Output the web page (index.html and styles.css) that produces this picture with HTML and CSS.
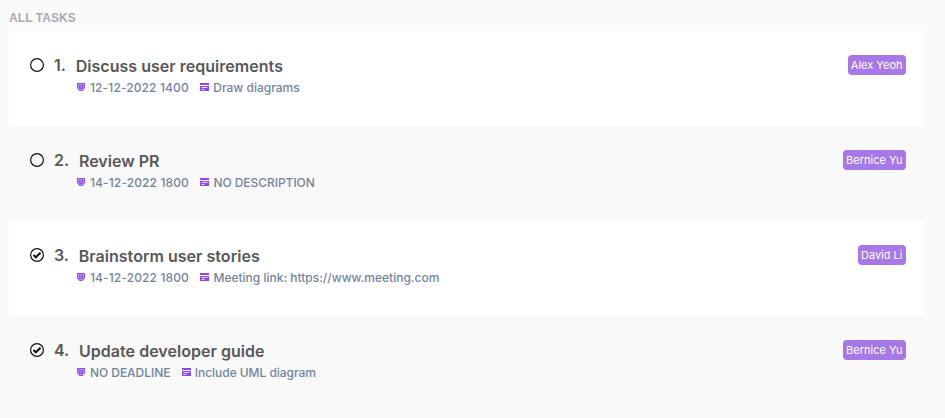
FILE: index.html
```html
<!DOCTYPE html>
<html lang="en"><head><meta charset="utf-8"><title>All tasks</title><link rel="stylesheet" href="styles.css"></head>
<body>
<svg class="defs" aria-hidden="true">
<symbol id="open" viewBox="0 0 16 16"><circle cx="8" cy="8" r="6.4" fill="none" stroke="#111" stroke-width="1.2"/></symbol>
<symbol id="done" viewBox="0 0 16 16"><circle cx="8" cy="8" r="6.4" fill="none" stroke="#111" stroke-width="1.2"/><path d="M4.500 8l2.300 2.300 4.700-4.600" fill="none" stroke="#111" stroke-width="2"/></symbol>
<symbol id="due" viewBox="0 0 10 10"><path d="M1 1h8v5L6.500 9h-3L1 6z" fill="#8f50f2"/><path d="M2.500 2.500h5v3.500L6 7.500H4L2.500 6zM5 3.500v2.500" fill="none" stroke="#d9c2ff" stroke-width=".6"/></symbol>
<symbol id="note" viewBox="0 0 10 10"><path d="M1 1h9v2H1zM1 4h9v5H1z" fill="#8a48f0"/><path d="M2.500 5.500h6M2.500 7.500h3" stroke="#fff" stroke-width=".8"/></symbol>
</svg>
<h1>ALL TASKS</h1>
<main>
<article class="task"><svg class="status"><use href="#open"/></svg><div class="body"><div class="head"><span class="num">1.</span><h2>Discuss user requirements</h2></div><p><svg><use href="#due"/></svg><span class="date">12-12-2022 1400</span><svg><use href="#note"/></svg><span>Draw diagrams</span></p></div><span class="tag">Alex Yeoh</span></article>
<article class="task"><svg class="status"><use href="#open"/></svg><div class="body"><div class="head"><span class="num">2.</span><h2>Review PR</h2></div><p><svg><use href="#due"/></svg><span class="date">14-12-2022 1800</span><svg><use href="#note"/></svg><span class="caps">NO DESCRIPTION</span></p></div><span class="tag">Bernice Yu</span></article>
<article class="task"><svg class="status"><use href="#done"/></svg><div class="body"><div class="head"><span class="num">3.</span><h2>Brainstorm user stories</h2></div><p><svg><use href="#due"/></svg><span class="date">14-12-2022 1800</span><svg><use href="#note"/></svg><span>Meeting link: https://www.meeting.com</span></p></div><span class="tag">David Li</span></article>
<article class="task"><svg class="status"><use href="#done"/></svg><div class="body"><div class="head"><span class="num">4.</span><h2>Update developer guide</h2></div><p><svg><use href="#due"/></svg><span class="caps">NO DEADLINE</span><svg><use href="#note"/></svg><span class="caps">Include UML diagram</span></p></div><span class="tag">Bernice Yu</span></article>
</main></body></html>
```
FILE: styles.css
```css
* { box-sizing: border-box; }
body { margin: 0; padding: 0 21px 0 9px; background: #fafafa; font-family: Inter, sans-serif; overflow: hidden; }
.defs { display: none; }
h1 { margin: 0; height: 31px; padding-top: 11px; font: bold 12px/15px "Liberation Sans", sans-serif; letter-spacing: .08px; color: #aaaab0; }
.task { display: flex; height: 95px; padding: 24px 18px 0 20px; background: #fff; }
.task:nth-child(even) { background: #f9f9f9; }
.status { width: 16px; height: 16px; margin-top: 2px; }
.body { flex: 1; margin-left: 9px; }
.head { display: flex; height: 23px; }
.num { margin-right: 9.800px; font-size: 16px; font-weight: 600; line-height: 20px; color: #585858; }
h2 { margin: 0; font-size: 16px; font-weight: 600; line-height: 22px; letter-spacing: .03px; color: #585858; }
p { display: flex; align-items: center; margin: 0 0 0 22px; height: 18px; font-size: 12px; font-weight: 500; color: #74859b; }
p svg { width: 10px; height: 10px; margin-right: 4px; }
p span { margin-right: 10.500px; }
.date { letter-spacing: .12px; }
.caps { letter-spacing: -.05px; }
.tag { height: 20px; padding: 0 3.500px 0 3px; border-radius: 4px; background: #a678e8; color: #fff; font-size: 11px; line-height: 20px; }
```
